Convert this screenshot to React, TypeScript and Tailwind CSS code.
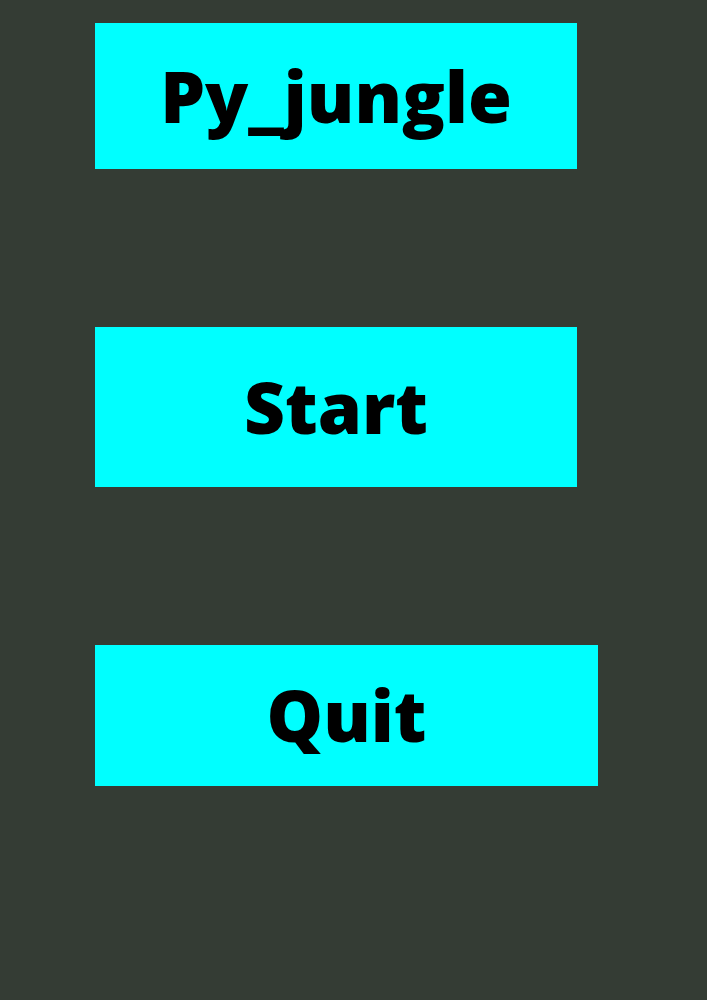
export default function App() {
  return (
    <div className="min-h-screen w-full bg-[#343c34] pl-[95px] pt-[23px]">
      <div className="flex flex-col items-start gap-[158px]" style={{ fontFamily: '"Open Sans", sans-serif' }}>
        <div className="flex h-[146px] w-[482px] items-center justify-center bg-[#00ffff]">
          <span className="text-[71px] font-extrabold leading-normal text-black">Py_jungle</span>
        </div>
        <div className="flex h-[160px] w-[482px] items-center justify-center bg-[#00ffff]">
          <span className="text-[71px] font-extrabold leading-normal text-black">Start</span>
        </div>
        <div className="flex h-[141px] w-[503px] items-center justify-center bg-[#00ffff]">
          <span className="text-[71px] font-extrabold leading-normal text-black">Quit</span>
        </div>
      </div>
    </div>
  );
}
